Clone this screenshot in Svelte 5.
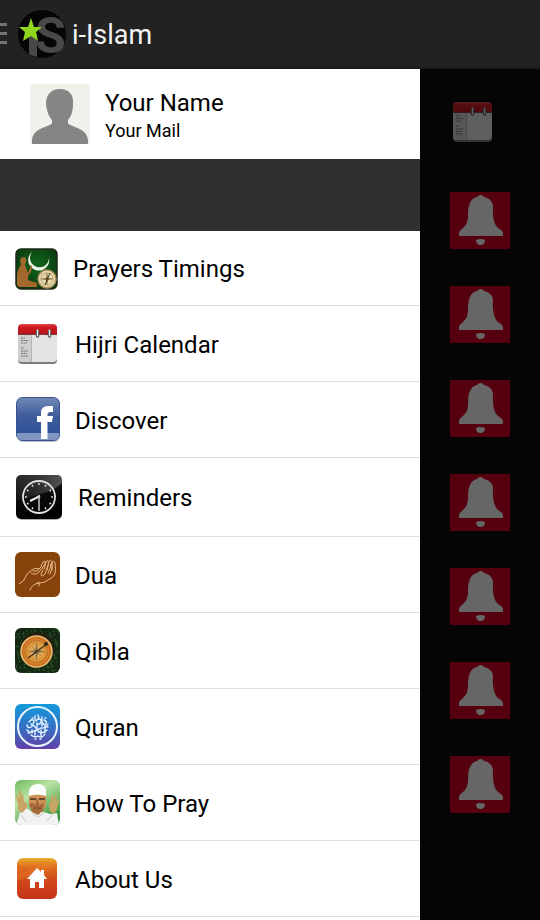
<script>
	let name = 'Your Name';
	let mail = 'Your Mail';

	// size is the icon's own width and height, the row grows with it
	const items = [
		{ id: 'prayers', label: 'Prayers Timings', width: 43, height: 44 },
		{ id: 'calendar', label: 'Hijri Calendar', width: 45, height: 45 },
		{ id: 'discover', label: 'Discover', width: 45, height: 45 },
		{ id: 'reminders', label: 'Reminders', width: 48, height: 48 },
		{ id: 'dua', label: 'Dua', width: 45, height: 45 },
		{ id: 'qibla', label: 'Qibla', width: 45, height: 45 },
		{ id: 'quran', label: 'Quran', width: 45, height: 45 },
		{ id: 'how', label: 'How To Pray', width: 45, height: 45 },
		{ id: 'about', label: 'About Us', width: 45, height: 45 }
	];

	const alarms = ['Fajr', 'Sunrise', 'Dhuhr', 'Asr', 'Maghrib', 'Isha', 'Qiyam'];

	// clock marks, one each 30 degrees
	const marks = Array.from({ length: 12 }, (_, i) => {
		const a = (i * Math.PI) / 6;
		return { x: 24 + 13 * Math.sin(a), y: 24 - 13 * Math.cos(a) };
	});

	// leaves behind the compass
	const leaves = Array.from({ length: 110 }, (_, i) => ({
		x: (i * 17 + (i % 11) * 2) % 45,
		y: (i * 29 + (i % 7) * 3) % 45,
		dx: (i % 5) - 2,
		dy: (i % 3) + 1
	}));
</script>

{#snippet calendar()}
	<svg class="calendar" viewBox="0 0 45 45" width="45" height="45" aria-hidden="true">
		<defs>
			<linearGradient id="cal-red" x1="0" y1="0" x2="0" y2="1">
				<stop offset="0" stop-color="#d94a4a" />
				<stop offset="0.3" stop-color="#cf1820" />
				<stop offset="1" stop-color="#b3141a" />
			</linearGradient>
		</defs>
		<rect x="3" y="6" width="39" height="37" rx="4" fill="#7c7c7c" />
		<rect x="3" y="5" width="39" height="36" rx="4" fill="#e3e3e3" />
		<path d="M3 14H16V41H7Q3 41 3 37Z" fill="#cfcfcf" />
		<path d="M16.500 14V41" stroke="#b5b5b5" />
		<path d="M3 14V7Q3 3 7 3H38Q42 3 42 7V14Z" fill="url(#cal-red)" />
		<path d="M3 13.500H42" stroke="#7e3a3c" />
		<path d="M6 17H10M6 19.500H13M6 22H12M6 27H9M6 30H13M6 32.500H12M6 35H13" stroke="#777" stroke-dasharray="2 0.500" />
		<path d="M22.500 10V15M34.500 10V15" stroke="#444" stroke-width="3.500" stroke-linecap="round" />
		<path d="M22.500 9V15M34.500 9V15" stroke="#eee" stroke-width="1.500" stroke-linecap="round" />
	</svg>
{/snippet}

{#snippet icon(id, width, height)}
	{#if id === 'prayers'}
		<svg viewBox="0 0 43 44" {width} {height} aria-hidden="true">
			<defs>
				<radialGradient id="pr-bg" cx="0.5" cy="0.4" r="0.7">
					<stop offset="0" stop-color="#12651b" />
					<stop offset="1" stop-color="#07330d" />
				</radialGradient>
			</defs>
			<rect x="1" y="3" width="41" height="40" rx="5" fill="url(#pr-bg)" stroke="#1d2a18" stroke-width="1.500" />
			<path d="M17 6A10.500 10.500 0 1 0 34 12A9.500 9.500 0 1 1 17 6Z" fill="#f2f7ee" />
			<path d="M5 14Q6 11 9 11Q12 12 11 16L10 19L13 27L15 22L15 19L17 20L16 26L13 30L13 34L22 37V41H5Q2 41 2 38V29Q3 22 6 19Z" fill="#a5682c" />
			<circle cx="32" cy="33" r="9" fill="#e9d9b1" stroke="#a58c55" stroke-width="1.500" />
			<circle cx="32" cy="33" r="6" fill="none" stroke="#b7a06c" />
			<path d="M32 26L33 32L39 33L33 34L32 40L31 34L25 33L31 32Z" fill="#7d6434" />
			<path d="M35 27L32 34L30 39" stroke="#3c331e" fill="none" />
		</svg>
	{:else if id === 'calendar'}
		{@render calendar()}
	{:else if id === 'discover'}
		<svg viewBox="0 0 45 45" {width} {height} aria-hidden="true">
			<defs>
				<linearGradient id="fb-bg" x1="0" y1="0" x2="0" y2="1">
					<stop offset="0" stop-color="#7288b6" />
					<stop offset="0.45" stop-color="#3d5b9b" />
					<stop offset="1" stop-color="#2c509a" />
				</linearGradient>
			</defs>
			<rect x="2" y="2" width="43" height="43" rx="6" fill="#b8bfcb" />
			<rect x="1.500" y="0.500" width="43" height="43" rx="6" fill="url(#fb-bg)" stroke="#38538c" />
			<path d="M2 36H44V38Q44 43 39 43H7Q2 43 2 38Z" fill="#8095c2" />
			<path d="M26 42V25H22V19H26V16Q26 9 33 9H38V15H35Q32.500 15 32.500 17.500V19H38L37 25H32.500V42Z" fill="#fff" />
		</svg>
	{:else if id === 'reminders'}
		<svg viewBox="0 0 48 48" {width} {height} aria-hidden="true">
			<defs>
				<linearGradient id="rm-bg" x1="0" y1="0" x2="0.3" y2="1">
					<stop offset="0" stop-color="#2a2a2a" />
					<stop offset="0.6" stop-color="#0a0a0a" />
					<stop offset="1" stop-color="#000" />
				</linearGradient>
				<linearGradient id="rm-shine" x1="0" y1="0" x2="1" y2="0">
					<stop offset="0" stop-color="#444" stop-opacity="0.2" />
					<stop offset="1" stop-color="#808080" />
				</linearGradient>
			</defs>
			<rect x="2" y="4" width="44" height="43" rx="5" fill="#aaa" />
			<rect x="1" y="2" width="46" height="44" rx="5" fill="url(#rm-bg)" />
			<path d="M6 2H42Q47 2 47 7V10Q38 20 1 27V7Q1 2 6 2Z" fill="url(#rm-shine)" opacity="0.6" />
			<circle cx="24" cy="24" r="16" fill="none" stroke="#dedede" stroke-width="1.800" />
			{#each marks as m}
				<circle cx={m.x} cy={m.y} r="0.900" fill="#e6e6e6" />
			{/each}
			<path d="M15 28L25 23" stroke="#eee" stroke-width="2" />
			<path d="M24 22V36" stroke="#ccc" stroke-width="1.500" />
		</svg>
	{:else if id === 'dua'}
		<svg viewBox="0 0 45 45" {width} {height} aria-hidden="true">
			<rect width="45" height="45" rx="6" fill="#86430b" />
			<g fill="none" stroke="#e4b98a" stroke-linecap="round" stroke-linejoin="round">
				<path d="M4 32Q10 29 11 24Q13 20 17 18Q20 15 24 17Q26 16 27 12Q28 8 31 10L29 17" />
				<path d="M15 38Q17 32 24 31Q30 31 33 28Q38 26 40 22Q41 16 40 11Q38 7 37 11L37 18" />
				<path d="M16 21Q20 24 24 20L28 15L31 10Q33 7 34 10L32 18" />
				<path d="M33 10Q36 6 37 11Q38 17 35 22M28 18L26 22Q26 26 30 22L33 13" />
				<path d="M36 12Q36 16 33 21M24 17Q22 20 18 19M22 31Q25 28 24 34" />
			</g>
		</svg>
	{:else if id === 'qibla'}
		<svg viewBox="0 0 45 45" {width} {height} aria-hidden="true">
			<defs>
				<radialGradient id="qb-dial">
					<stop offset="0" stop-color="#f0cf8c" />
					<stop offset="0.5" stop-color="#dd9a3f" />
					<stop offset="1" stop-color="#c9691c" />
				</radialGradient>
				<clipPath id="qb-clip"><rect width="45" height="45" rx="6" /></clipPath>
			</defs>
			<g clip-path="url(#qb-clip)">
				<rect width="45" height="45" fill="#142814" />
				{#each leaves as l}
					<path d="M{l.x} {l.y}l{l.dx} {l.dy}" stroke="#2d5527" stroke-width="1.200" />
				{/each}
				<circle cx="22" cy="22" r="17" fill="#271b0c" />
				<circle cx="21.500" cy="23.500" r="15.500" fill="url(#qb-dial)" stroke="#e7c27a" stroke-width="1.500" />
				<circle cx="21.500" cy="23.500" r="11" fill="none" stroke="#a96220" stroke-dasharray="1 1" />
				<path d="M21.500 14L23 22L31 23.500L23 25L21.500 33L20 25L12 23.500L20 22Z" fill="#8c7446" />
				<path d="M17 19L26 28M26 19L17 28" stroke="#9d7a40" />
				<path d="M13 30L32 16" stroke="#3b2e1e" stroke-width="1.200" />
				<circle cx="31" cy="16" r="2" fill="#28291f" />
				<circle cx="21.500" cy="23.500" r="1.500" fill="#4c3b22" />
			</g>
		</svg>
	{:else if id === 'quran'}
		<svg viewBox="0 0 45 45" {width} {height} aria-hidden="true">
			<defs>
				<linearGradient id="qr-bg" x1="0" y1="0" x2="0" y2="1">
					<stop offset="0" stop-color="#159bdd" />
					<stop offset="0.5" stop-color="#3272c4" />
					<stop offset="1" stop-color="#6240a8" />
				</linearGradient>
			</defs>
			<rect width="45" height="45" rx="6" fill="url(#qr-bg)" />
			<circle cx="22.500" cy="22.500" r="19.500" fill="none" stroke="#e9f4fd" stroke-width="2" />
			<g fill="none" stroke="#e6f2ff" stroke-width="1.400" stroke-linecap="round">
				<path d="M12 21Q13 25 16 23Q18 20 20 23Q22 27 26 24Q30 25 33 20" />
				<path d="M12 26Q15 30 19 27Q22 25 24 28Q28 30 32 26" />
				<path d="M14 18Q17 14 19 17Q19 21 16 20M21 17Q24 13 26 16Q27 20 23 20M29 16Q32 17 31 20Q29 22 28 19" />
				<path d="M16 31Q20 34 23 32Q27 35 30 30M20 12V16M23 11L24 15M27 13V22M20 27V31M26 26V32" />
				<path d="M17 14H18M30 14H31M13 29H14M20 35H21M25 35H26M32 23H33M17 26V29M30 22V28M22 19V24" />
			</g>
		</svg>
	{:else if id === 'how'}
		<svg viewBox="0 0 45 45" {width} {height} aria-hidden="true">
			<defs>
				<linearGradient id="hw-bg" x1="0" y1="0" x2="0.6" y2="1">
					<stop offset="0" stop-color="#6fba5d" />
					<stop offset="0.4" stop-color="#b9e3a4" />
					<stop offset="1" stop-color="#3b963d" />
				</linearGradient>
				<clipPath id="hw-clip"><rect width="45" height="45" rx="6" /></clipPath>
			</defs>
			<g clip-path="url(#hw-clip)">
				<rect width="45" height="45" fill="url(#hw-bg)" />
				<path d="M1 45L5 33L10 27L17 32H29L35 34L42 33L44 45Z" fill="#f1f2f1" />
				<path d="M3 25L1 16L2 14L4 19L4 11L6 11L7 18L8 12L9 21L12 24L12 28L7 33L3 30Z" fill="#c9a565" />
				<path d="M35 31L34 25L35 22L36 23L36 16L38 15L39 21L40 14L42 15L41 22L43 19L44 21L42 29L39 34Z" fill="#c9a565" />
				<path d="M14 15H31L31 24Q30 30 24 34Q17 31 14 25Z" fill="#cf9058" />
				<path d="M14 24Q17 22 20 24L24 25L29 23L28 30L23 35L17 32Z" fill="#a76a3b" />
				<path d="M15 19H21M24 19H30" stroke="#43301f" stroke-width="1.300" />
				<path d="M22 19V24H24M19 28H26" stroke="#754421" fill="none" />
				<path d="M14 16V10Q16 4 23 4Q30 4 31 10V16Q22 13 14 16Z" fill="#fcfdfb" />
				<path d="M6 35L11 42M38 34L32 41M17 33L23 37L29 33" stroke="#c6ccc6" fill="none" />
			</g>
		</svg>
	{:else}
		<svg viewBox="0 0 45 45" {width} {height} aria-hidden="true">
			<defs>
				<linearGradient id="ab-bg" x1="0" y1="0" x2="0" y2="1">
					<stop offset="0" stop-color="#eab02c" />
					<stop offset="0.2" stop-color="#df7020" />
					<stop offset="0.6" stop-color="#ce4319" />
					<stop offset="1" stop-color="#c53518" />
				</linearGradient>
			</defs>
			<rect x="2" y="2" width="40" height="41" rx="6" fill="url(#ab-bg)" />
			<path d="M2 18Q20 14 32 4L42 8Q26 19 2 25Z" fill="#f08a28" opacity="0.250" />
			<path d="M22 12L26 16V14H29V19L32 23H29V32H24V26H20V32H15V23H12Z" fill="#fff" />
		</svg>
	{/if}
{/snippet}

<div class="app">
	<header class="bar">
		<button class="menu" aria-label="Close menu">
			<span></span>
			<span></span>
			<span></span>
		</button>
		<svg class="logo" viewBox="0 0 48 48" width="48" height="48" aria-hidden="true">
			<circle cx="24" cy="24" r="24" fill="#050505" />
			<path d="M11 24H19V47Q14 46 11 44Z" fill="#484848" />
			<text x="17" y="43" class="logo-s">S</text>
			<path d="M13 8L16 17H24L18 22L20 31L13 26L5 31L7 22L1 17H10Z" fill="#8fd61c" />
		</svg>
		<h1>i-Islam</h1>
	</header>

	<div class="body">
		<aside class="drawer">
			<div class="profile">
				<svg viewBox="0 0 60 60" width="60" height="60" aria-hidden="true">
					<rect width="60" height="60" fill="#f0f1ea" />
					<path d="M30 5C39 5 44 11 43 20C43 29 40 34 38 36V39C39 43 57 43 58 56V60H2V56C3 43 21 43 22 39V36C20 34 17 29 16 20C16 11 21 5 30 5Z" fill="#858585" />
				</svg>
				<div class="who">
					<div class="name">{name}</div>
					<div class="mail">{mail}</div>
				</div>
			</div>
			<div class="band"></div>
			<nav>
				<ul>
					{#each items as item}
						<li>
							<a href="#{item.id}">
								{@render icon(item.id, item.width, item.height)}
								<span>{item.label}</span>
							</a>
						</li>
					{/each}
				</ul>
			</nav>
		</aside>

		<main class="behind">
			<button class="open-calendar" aria-label="Calendar">
				{@render calendar()}
			</button>
			{#each alarms as alarm}
				<button class="alarm" aria-label={alarm}>
					<svg viewBox="0 0 60 57" width="60" height="57" aria-hidden="true">
						<rect width="60" height="57" fill="#56000f" />
						<path d="M30.500 3Q33 3 34 5Q41 6 43 13Q42 31 48 36Q53 39 53 41V44H9V41Q9 39 13 36Q19 31 18 20Q18 15 20 11Q22 6 27 5Q28 3 30.500 3Z" fill="#666" />
						<path d="M26 48Q30.500 46 35 48Q35 53 30.500 53Q26 53 26 48Z" fill="#666" />
					</svg>
				</button>
			{/each}
		</main>
	</div>
</div>

<style>
	:global(body) {
		margin: 0;
		background: #050505;
	}

	* {
		box-sizing: border-box;
	}

	.app {
		display: flex;
		flex-direction: column;
		min-height: 100vh;
		font-family: Roboto, "Liberation Sans", sans-serif;
		color: #000;
	}

	button {
		display: block;
		padding: 0;
		border: 0;
		background: none;
		cursor: pointer;
	}

	svg {
		display: block;
		flex: none;
	}

	.bar {
		display: flex;
		align-items: center;
		height: 69px;
		background: #222;
		border-bottom: 2px solid #1a1a1a;
	}

	.menu {
		display: flex;
		flex-direction: column;
		gap: 6px;
		width: 7px;
		margin-right: 11px;
	}

	.menu span {
		height: 3px;
		background: #747474;
	}

	.logo {
		overflow: visible;
	}

	.logo-s {
		font: bold 50px Roboto, "Liberation Sans", sans-serif;
		fill: #484848;
	}

	h1 {
		margin: 0 0 0 6px;
		padding-top: 2px;
		font-size: 27px;
		font-weight: 400;
		line-height: 32px;
		color: #f3f3f3;
	}

	.body {
		flex: 1;
		display: grid;
		grid-template-columns: 7fr 2fr;
	}

	.drawer {
		background: #fff;
	}

	.profile {
		display: flex;
		align-items: center;
		gap: 15px;
		padding: 15px 30px;
	}

	.who {
		padding-top: 2px;
	}

	.name {
		font-size: 24px;
		line-height: 32px;
	}

	.mail {
		font-size: 18px;
		line-height: 24px;
	}

	.band {
		height: 72px;
		background: #303030;
	}

	ul {
		margin: 0;
		padding: 0;
		list-style: none;
	}

	li {
		border-bottom: 1px solid #dedede;
	}

	a {
		display: flex;
		align-items: center;
		gap: 15px;
		padding: 15px;
		font-size: 24px;
		line-height: 32px;
		color: #000;
		text-decoration: none;
	}

	a span {
		padding-top: 2px;
	}

	.behind {
		display: flex;
		flex-direction: column;
		align-items: flex-start;
		gap: 37px;
		padding: 30px;
		background: #050505;
	}

	.open-calendar {
		margin-bottom: 11px;
	}

	.open-calendar .calendar {
		opacity: 0.4;
	}
</style>
